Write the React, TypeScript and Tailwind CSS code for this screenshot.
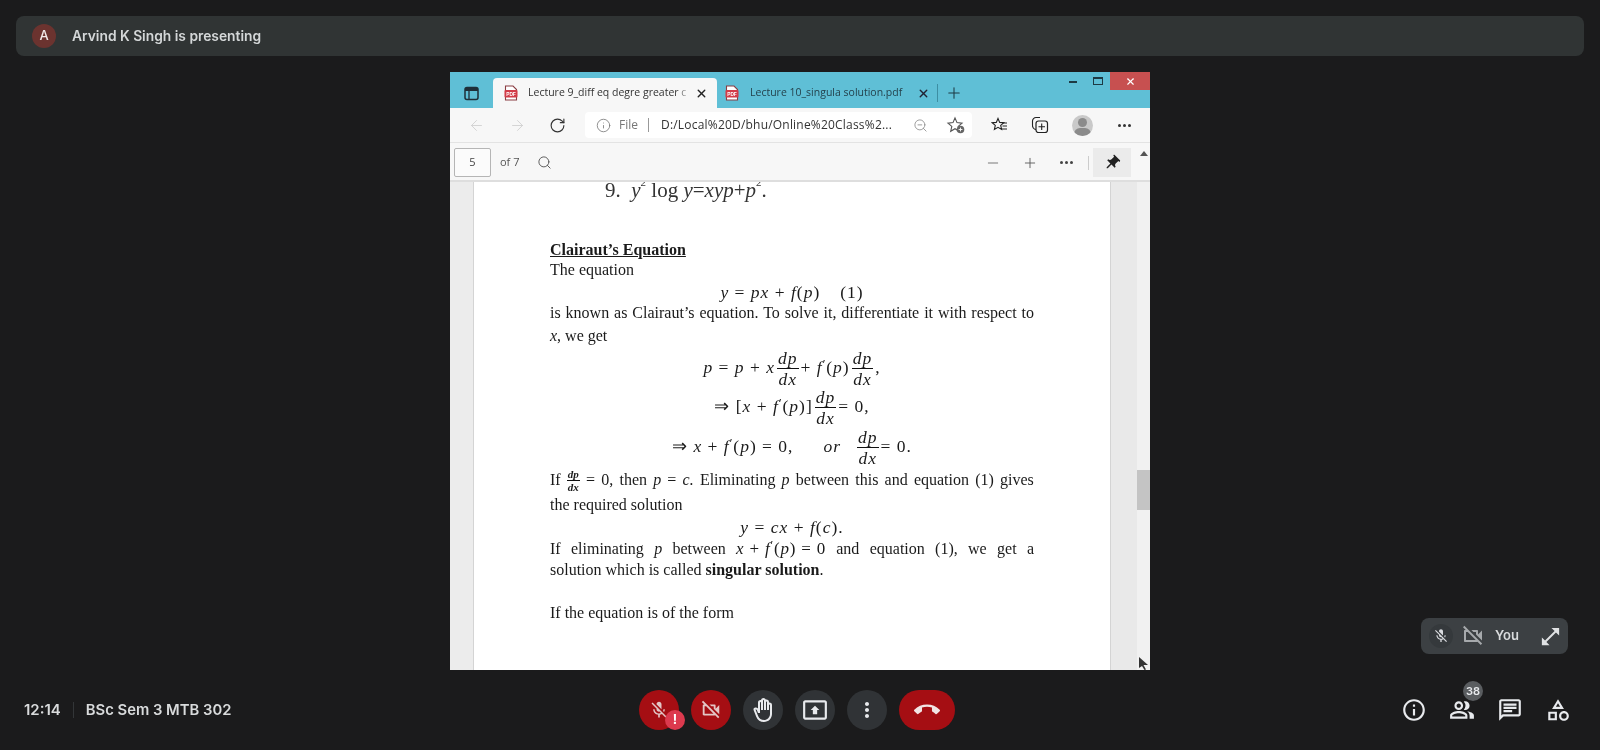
import React from "react";
import { ArrowLeft, ArrowRight, RotateCw, Info, ZoomOut, Search, Minus, Plus, X } from "lucide-react";
import {
  MdMicOff, MdOutlineVideocamOff, MdOutlineBackHand, MdOutlinePresentToAll, MdMoreVert, MdCallEnd,
  MdInfoOutline, MdOutlinePeopleAlt, MdOutlineChat, MdOutlineCategory, MdOpenInFull, MdPushPin,
} from "react-icons/md";

const PdfIcon = () => (
  <svg width="14" height="16" viewBox="0 0 14 16" className="shrink-0">
    <path d="M1.5 1h7.5l3.5 3.5V15h-11z" fill="#fff" stroke="#8a3d42" strokeWidth="1.1" />
    <rect x="0.5" y="5" width="13" height="7.5" rx="1" fill="#d23c48" />
    <text x="7" y="10.6" textAnchor="middle" fontSize="4.8" fontWeight="700" fill="#fff" fontFamily="Liberation Sans, sans-serif">PDF</text>
  </svg>
);

const Frac = ({ a, b, small }: { a: string; b: string; small?: boolean }) => (
  <span className={`inline-flex flex-col items-center italic align-middle ${small ? "text-[11px] leading-[12px] font-semibold" : "leading-[20px] mx-[2px]"}`}>
    <span className="px-[1px]">{a}</span>
    <span className="self-stretch text-center border-t border-[#111] px-[1px]">{b}</span>
  </span>
);

const I = ({ children }: { children: React.ReactNode }) => <span className="italic">{children}</span>;
const FP = () => <><I>f</I><span className="text-[12px] align-[5px] leading-none">′</span></>;

const MathRow = ({ h, children }: { h: string; children: React.ReactNode }) => (
  <div className={`${h} flex items-center justify-center`}>
    <div className="whitespace-pre text-[17.5px] leading-none tracking-[1px]">{children}</div>
  </div>
);

const Line = ({ h, children, justify }: { h: string; children: React.ReactNode; justify?: boolean }) => (
  <div className={`${h} flex items-center`}>
    <div className={`w-full leading-none ${justify ? "text-justify [text-align-last:justify]" : ""}`}>{children}</div>
  </div>
);

const Circle = ({ bg, children }: { bg: string; children: React.ReactNode }) => (
  <div className={`relative w-10 h-10 rounded-full flex items-center justify-center text-[#e8eaed] ${bg}`}>{children}</div>
);

export default function App() {
  return (
    <div className="w-[1600px] h-[750px] overflow-hidden bg-[#1b1b1c] flex flex-col font-['Inter',sans-serif] text-[#e0e2e4] relative blur-[0.35px]">
      {/* presenting bar */}
      <div className="mt-4 mx-4 h-10 rounded-lg bg-[#303434] flex items-center pl-4 shrink-0">
        <div className="w-6 h-6 rounded-full bg-[#6b332f] flex items-center justify-center text-[13px] font-medium text-[#f1e9e8]">A</div>
        <div className="ml-4 text-[13.8px] font-semibold text-[#d4d7d8]">Arvind K Singh is presenting</div>
      </div>

      {/* browser */}
      <div className="mt-4 mx-auto w-[700px] h-[598px] flex flex-col bg-white shrink-0 font-['Open_Sans',sans-serif] text-[#333]">
        {/* title bar */}
        <div className="h-[36px] bg-[#5fbfd6] flex items-end relative shrink-0">
          <div className="w-[43px] h-[30px] flex items-center justify-center">
            <svg width="15" height="15" viewBox="0 0 15 15">
              <rect x="1" y="1.5" width="13" height="12" rx="2" fill="none" stroke="#1f2f38" strokeWidth="1.5" />
              <path d="M1 3.5h13" stroke="#1f2f38" strokeWidth="3" />
              <path d="M5 4v9" stroke="#1f2f38" strokeWidth="1.3" />
            </svg>
          </div>
          <div className="w-[224px] h-[30px] bg-[#f7f7f7] rounded-t-[4px] flex items-center pl-[11px] relative">
            <PdfIcon />
            <div className="ml-[10px] w-[163px] overflow-hidden whitespace-nowrap text-[10.5px] text-[#333] relative">
              Lecture 9_diff eq degre greater c
              <div className="absolute right-0 top-0 bottom-0 w-[14px] bg-gradient-to-r from-transparent to-[#f7f7f7]" />
            </div>
            <X size={13} strokeWidth={2.5} className="absolute left-[202px] text-[#222]" />
          </div>
          <div className="w-[221px] h-[30px] flex items-center pl-[8px] relative">
            <PdfIcon />
            <div className="ml-[11px] text-[10.5px] text-[#24424d] whitespace-nowrap">Lecture 10_singula solution.pdf</div>
            <X size={13} strokeWidth={2.5} className="absolute left-[200px] text-[#223]" />
            <div className="absolute left-[220px] top-[6px] w-px h-[18px] bg-[#3d8ea3]" />
          </div>
          <div className="h-[30px] flex items-center ml-[7px]">
            <Plus size={18} strokeWidth={1.4} className="text-[#1d3a44]" />
          </div>
          {/* window controls */}
          <div className="absolute right-0 top-0 flex items-start h-[18px]">
            <div className="w-[8px] h-[2px] bg-[#1d3a44] mt-[9px] mr-[16px]" />
            <div className="w-[10px] h-[8px] border border-[#1d3a44] border-t-2 mt-[5px] mr-[7px]" />
            <div className="w-[40px] h-[18px] bg-[#c75050] flex items-center justify-center">
              <X size={11} strokeWidth={2.5} className="text-white" />
            </div>
          </div>
        </div>

        {/* address toolbar */}
        <div className="h-[35px] bg-[#f7f7f7] flex items-center shrink-0 relative border-b border-[#e3e3e3]">
          <ArrowLeft size={17} strokeWidth={1.2} className="ml-[18px] text-[#cfcfcf]" />
          <ArrowRight size={17} strokeWidth={1.2} className="ml-[24px] text-[#cfcfcf]" />
          <RotateCw size={17} strokeWidth={1.6} className="ml-[23px] text-[#333]" />
          <div className="ml-[19px] w-[387px] h-[26px] bg-white rounded-[4px] flex items-center pl-[11px] text-[12px]">
            <Info size={15} strokeWidth={1.3} className="text-[#777]" />
            <span className="ml-[8px] text-[#777]">File</span>
            <div className="ml-[10px] w-px h-[14px] bg-[#999]" />
            <span className="ml-[12px] text-[#333] whitespace-nowrap tracking-[0.2px]">D:/Local%20D/bhu/Online%20Class%2...</span>
            <ZoomOut size={15} strokeWidth={1.3} className="ml-[21px] text-[#888]" />
            <svg width="20" height="20" viewBox="0 0 20 20" className="ml-[18px]">
              <path d="M9 3l2 4.6 5 .5-3.8 3.3 1.1 4.9L9 13.7l-4.3 2.6 1.1-4.9L2 8.1l5-.5z" fill="none" stroke="#555" strokeWidth="1.1" />
              <circle cx="14.5" cy="14.5" r="3.8" fill="#666" />
              <path d="M12.6 14.5h3.8M14.5 12.6v3.8" stroke="#fff" strokeWidth="0.9" />
            </svg>
          </div>
          <svg width="18" height="16" viewBox="0 0 18 16" className="ml-[19px]">
            <path d="M7 1.500l1.700 3.900 4.100.3-3.100 2.700.9 4L7 10.300l-3.600 2.100.9-4-3.100-2.700 4.100-.3z" fill="none" stroke="#222" strokeWidth="1.1" />
            <path d="M11 6h5M11.500 9h4.500M11 12h5" stroke="#222" strokeWidth="1" />
          </svg>
          <svg width="18" height="18" viewBox="0 0 18 18" className="ml-[22px]">
            <path d="M5 13.500A4 4 0 0 1 1.500 9V5A3.500 3.500 0 0 1 5 1.500h4" fill="none" stroke="#222" strokeWidth="1.1" />
            <rect x="5" y="5" width="11.500" height="11.500" rx="2.500" fill="none" stroke="#222" strokeWidth="1.2" />
            <path d="M7.500 10.700h6.500M10.700 7.500V14" stroke="#222" strokeWidth="1.1" />
          </svg>
          <div className="ml-[23px] w-[21px] h-[21px] rounded-full bg-[#c9c9c9] relative overflow-hidden">
            <div className="absolute left-[6px] top-[3px] w-[9px] h-[9px] rounded-full bg-[#8b8b8b]" />
            <div className="absolute left-[2px] top-[13px] w-[17px] h-[12px] rounded-full bg-[#8b8b8b]" />
          </div>
          <div className="ml-[25px] flex gap-[2px]">
            <span className="w-[3px] h-[3px] rounded-full bg-[#333]" />
            <span className="w-[3px] h-[3px] rounded-full bg-[#333]" />
            <span className="w-[3px] h-[3px] rounded-full bg-[#333]" />
          </div>
        </div>

        {/* pdf toolbar */}
        <div className="h-[39px] bg-[#f7f7f7] border-b-2 border-[#dedede] flex items-center shrink-0 pl-[4px] pt-[2px] text-[11px] text-[#555]">
          <div className="w-[37px] h-[29px] bg-[#fbfbfb] border border-[#b5b5b5] rounded-[2px] flex items-center justify-center text-[#444]">5</div>
          <span className="ml-[9px]">of 7</span>
          <Search size={15} strokeWidth={1.5} className="ml-[18px] text-[#555]" />
          <Minus size={16} strokeWidth={1.3} className="ml-[433px] text-[#666]" />
          <Plus size={16} strokeWidth={1.3} className="ml-[21px] text-[#555]" />
          <div className="ml-[22px] flex gap-[2px]">
            <span className="w-[3px] h-[3px] rounded-full bg-[#444]" />
            <span className="w-[3px] h-[3px] rounded-full bg-[#444]" />
            <span className="w-[3px] h-[3px] rounded-full bg-[#444]" />
          </div>
          <div className="ml-[15px] w-px h-[14px] bg-[#ccc]" />
          <div className="ml-[4px] w-[38px] h-[29px] bg-[#ebebeb] flex items-center justify-center">
            <MdPushPin size={18} className="rotate-45 text-[#222]" />
          </div>
        </div>

        {/* pdf body */}
        <div className="flex-1 min-h-0 flex bg-[#ececec]">
          <div className="w-[23px] shrink-0" />
          <div className="w-[638px] shrink-0 bg-white border-x border-[#d4d4d4] overflow-hidden pl-[76px] pr-[76px] font-['Liberation_Serif',serif] text-[16px] text-[#1a1a1a]">
            <div className="h-[18px] flex items-center text-[21px] pl-[55px] whitespace-pre text-[#333]">
              <span>9.  <I>y</I><span className="text-[11px] align-[11px] leading-none">2</span> log <I>y</I>=<I>xyp</I>+<I>p</I><span className="text-[11px] align-[11px] leading-none">2</span>.</span>
            </div>
            <div className="h-[40px]" />
            <Line h="h-[20px]"><span className="font-bold underline">Clairaut’s Equation</span></Line>
            <Line h="h-[20px]">The equation</Line>
            <MathRow h="h-[26px]"><I>y</I> = <I>px</I> + <I>f</I>(<I>p</I>)<span className="inline-block w-[20px]" />(1)</MathRow>
            <Line h="h-[14px]" justify>is known as Clairaut’s equation. To solve it, differentiate it with respect to</Line>
            <Line h="h-[32px]"><I>x</I>, we get</Line>
            <MathRow h="h-[32px]"><I>p</I> = <I>p</I> + <I>x</I><Frac a="dp" b="dx" />+ <FP />(<I>p</I>)<Frac a="dp" b="dx" />,</MathRow>
            <MathRow h="h-[46px]">⇒ [<I>x</I> + <FP />(<I>p</I>)]<Frac a="dp" b="dx" />= 0,</MathRow>
            <MathRow h="h-[34px]">⇒ <I>x</I> + <FP />(<I>p</I>) = 0,<span className="inline-block w-[30px]" /><I>or</I><span className="inline-block w-[14px]" /><Frac a="dp" b="dx" />= 0.</MathRow>
            <div className="h-[32px] flex items-center justify-between">
              <span>If</span><Frac a="dp" b="dx" small /><span>=</span><span>0,</span><span>then</span><I>p</I><span>=</span><I>c.</I>
              <span>Eliminating</span><I>p</I><span>between</span><span>this</span><span>and</span><span>equation</span><span>(1)</span><span>gives</span>
            </div>
            <Line h="h-[18px]">the required solution</Line>
            <MathRow h="h-[28px]"><I>y</I> = <I>cx</I> + <I>f</I>(<I>c</I>).</MathRow>
            <div className="h-[14px] flex items-center justify-between whitespace-pre">
              <span>If</span><span>eliminating</span><I>p</I><span>between</span><span className="text-[17px] tracking-[0.8px]"><I>x</I> + <FP />(<I>p</I>) = 0</span><span>and</span><span>equation</span><span>(1),</span><span>we</span><span>get</span><span>a</span>
            </div>
            <Line h="h-[28px]">solution which is called <b>singular solution</b>.</Line>
            <Line h="h-[58px]">If the equation is of the form</Line>
          </div>
          <div className="w-[26px] shrink-0 bg-[#e9e9e9]" />
          <div className="w-[13px] shrink-0 bg-[#f1f1f1] flex flex-col items-center relative">
            <div className="absolute -top-[31px] w-0 h-0 border-x-[4px] border-x-transparent border-b-[5px] border-b-[#555]" />
            <div className="mt-[288px] w-full h-[40px] bg-[#c4c4c4]" />
            <svg width="12" height="14" viewBox="0 0 12 14" className="absolute bottom-0 left-0">
              <path d="M2 1l9 8H6.500L9 13.500 7.500 14 5 10l-3 2z" fill="#333" />
            </svg>
          </div>
        </div>
      </div>

      {/* self view */}
      <div className="absolute left-[1421px] top-[618px] w-[147px] h-[36px] rounded-lg bg-[#3c4043] flex items-center pl-[8px]">
        <div className="w-6 h-6 rounded-full bg-[#35393c] flex items-center justify-center">
          <MdMicOff size={16} className="text-[#dadce0]" />
        </div>
        <MdOutlineVideocamOff size={24} className="ml-[8px] text-[#a6a9ac]" />
        <span className="ml-[10px] text-[13px] font-semibold text-[#d9dbdd]">You</span>
        <MdOpenInFull size={23} className="ml-[20px] text-[#e0e2e4]" />
      </div>

      {/* bottom bar */}
      <div className="flex-1 flex items-center">
        <div className="w-[639px] shrink-0 flex items-center pl-6 text-[15px] font-semibold text-[#d9dbdc]">
          <span>12:14</span>
          <div className="ml-[12px] w-px h-[16px] bg-[#333638]" />
          <span className="ml-[12px] text-[14.8px]">BSc Sem 3 MTB 302</span>
        </div>
        <div className="flex items-center gap-3">
          <Circle bg="bg-[#a50e13]">
            <MdMicOff size={20} className="text-[#e3c6c6]" />
            <div className="absolute left-[26px] top-[20px] w-5 h-5 rounded-full bg-[#dc3a4e] flex items-center justify-center text-[13px] font-bold text-white">!</div>
          </Circle>
          <Circle bg="bg-[#a50e13]"><MdOutlineVideocamOff size={22} className="text-[#e3c6c6]" /></Circle>
          <Circle bg="bg-[#303336]"><MdOutlineBackHand size={24} /></Circle>
          <Circle bg="bg-[#303336]"><MdOutlinePresentToAll size={26} /></Circle>
          <Circle bg="bg-[#303336]"><MdMoreVert size={24} /></Circle>
          <div className="w-14 h-10 rounded-full bg-[#a50e13] flex items-center justify-center">
            <MdCallEnd size={26} className="text-[#f1e4e4]" />
          </div>
        </div>
        <div className="flex-1 flex items-center justify-end pr-[29px] gap-[22px] text-[#e8eaed]">
          <MdInfoOutline size={26} />
          <div className="relative">
            <MdOutlinePeopleAlt size={26} />
            <div className="absolute left-[14px] -top-[16px] w-5 h-5 rounded-full bg-[#5a5d60] flex items-center justify-center text-[11px] font-semibold text-[#e8eaed]">38</div>
          </div>
          <MdOutlineChat size={26} />
          <MdOutlineCategory size={26} />
        </div>
      </div>
    </div>
  );
}
